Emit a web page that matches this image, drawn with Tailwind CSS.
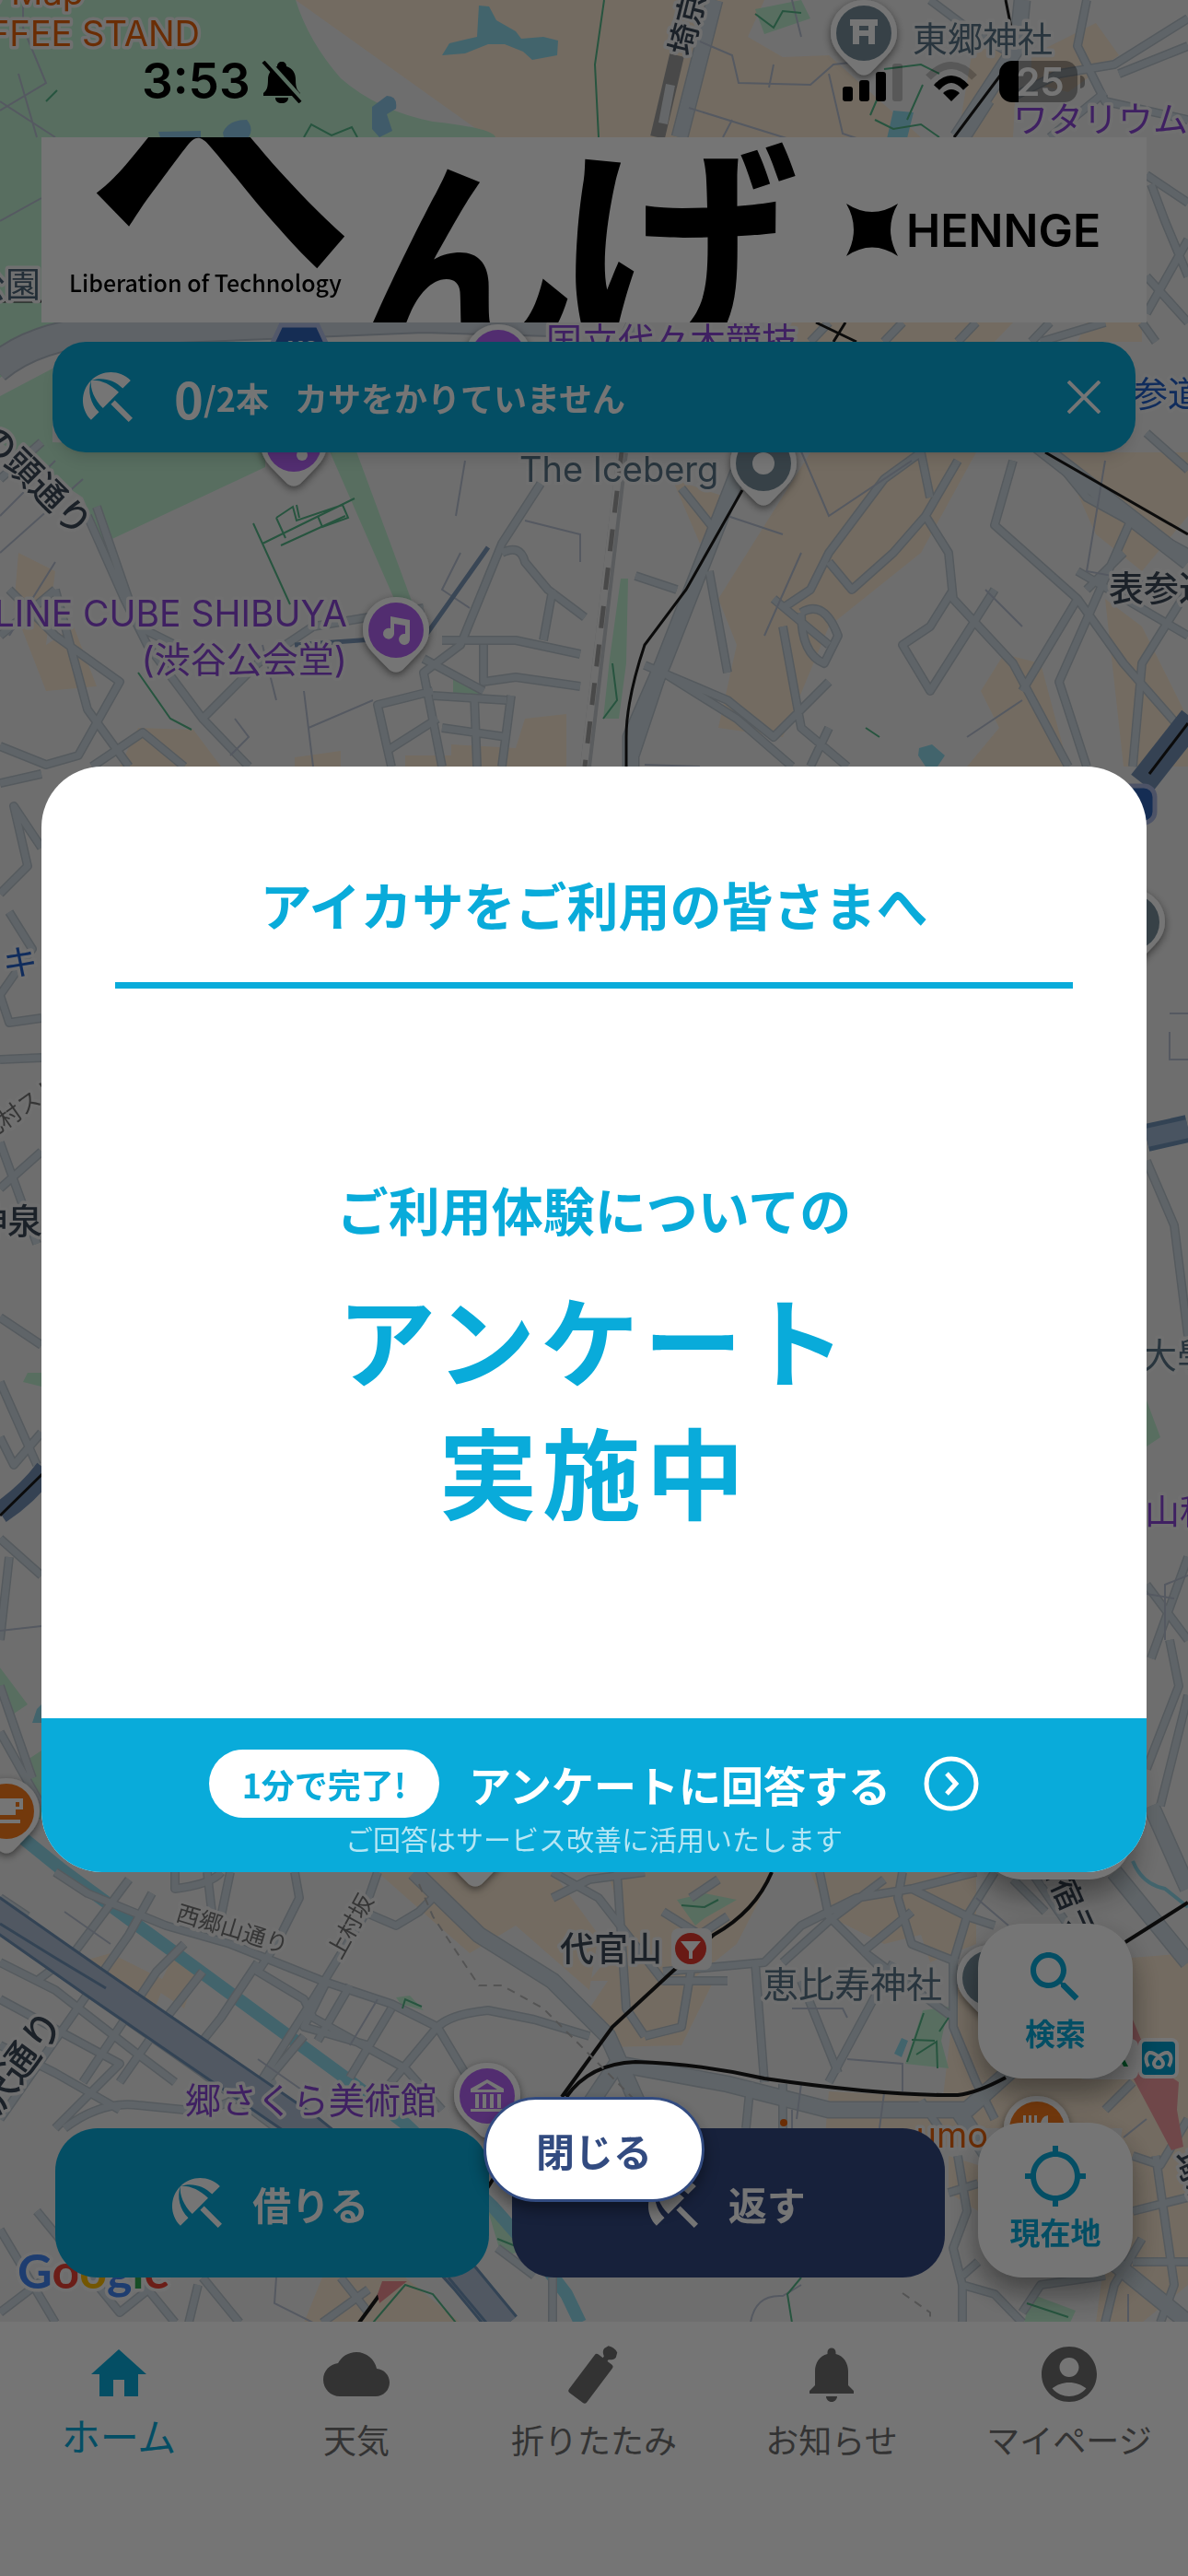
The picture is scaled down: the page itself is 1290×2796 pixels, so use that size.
<!DOCTYPE html>
<html lang="ja">
<head>
  <meta charset="UTF-8">
  <meta name="viewport" content="width=device-width, initial-scale=1.0">
  <title>アイカサ</title>
  <script src="https://cdn.jsdelivr.net/npm/@tailwindcss/browser@4"></script>
</head>
<body class="bg-white font-['Noto_Sans_CJK_JP',sans-serif]">
  <div class="relative flex min-h-screen flex-col overflow-hidden">

    <main class="relative flex flex-1 flex-col overflow-hidden bg-[#f0f0f0]">
      <!-- map -->
      <svg class="absolute inset-0 h-full w-full" viewBox="0 0 1290 2520" preserveAspectRatio="xMidYMin slice" fill="none" aria-hidden="true">
        <defs>
          <path id="pin" d="M0-36C20-36 36-20 36-1C36 16 25 24 14 36L7 43Q0 48-7 43L-14 36C-25 24-36 16-36-1C-36-20-20-36 0-36Z" fill="#fff"/>
          <filter id="soft" x="-30%" y="-30%" width="160%" height="170%"><feDropShadow dx="0" dy="3" stdDeviation="4" flood-opacity=".5"/></filter>
          <g id="avenues">
            <path d="M1110 0L1105 50L1040 149M1110 470L1290 610M810 491L720 720L685 800V832M690 350L680 371"/>
            <path d="M776 0L738 149M450 2032L520 2100L600 2150L660 2210L700 2300M630 2300L670 2240L790 2262L900 2290H1050L1150 2200M1040 2290L1080 2350"/>
            <path d="M1210 2032L1290 2130M1190 2440L1290 2521M1250 1960L1290 2050"/>
          </g>
          <g id="streets">
            <path d="M1290 20L1210 70L1150 80L1100 105M1180 0L1170 50L1200 110L1290 130M1100 60L1050 30L1010 0M1215 80L1290 50M1140 149L1200 100M1050 149L1075 110"/>
            <path d="M0 690L60 640M0 520L45 480M95 560L135 650L160 700L220 780L270 832M220 780L280 720L340 680L460 660M105 550L150 680L190 700M0 810L50 830L85 820L130 740L60 690L10 640M60 640L95 770L140 832M100 832L155 795L200 832"/>
            <path d="M587 525L545 590L500 700L460 730L480 832M545 600Q565 590 570 610L595 640L635 670M480 695H560L630 710M600 640L590 695M525 700V740L560 735L630 745M460 715L525 750M470 750L410 765L425 832M555 755L545 832M480 790L550 800M515 755L518 832M470 755L550 760M420 815L475 780"/>
            <path d="M690 625L735 640M740 530L780 580M690 820L720 730L800 780L860 832M770 620L790 730M700 722L790 760L840 800L900 740M850 660L880 640L900 600L960 520L1000 491M900 610L925 640L970 600L1005 560L1040 500M1005 560L1030 600L1035 650L1100 720L1160 832M1035 640L1010 680L980 700L1010 750L1080 640M1100 500L1080 570L1170 650L1220 720L1290 800M1170 650L1110 750M1220 600L1180 640M850 680L870 790L920 832M840 650L900 700M1170 620L1290 690M1230 560L1150 740L1180 832M900 790L880 832M870 665Q895 650 910 690L895 720Q870 710 870 665M1290 640L1240 720L1230 832M1140 491L1180 540L1290 600M1000 491L1010 540"/>
            <path d="M1200 350L1130 371M1245 190L1290 220M1250 200L1265 240L1290 300M1245 300L1290 350M1290 260L1245 340M1245 470L1290 510M900 350L880 371M980 350L960 371M1060 350L1040 371M1140 350L1120 371M1240 350L1255 371"/>
            <path d="M0 850L45 840M0 970L30 940L15 875L45 920M10 990L35 1030L0 1080L10 1110L45 1105M0 1150L45 1148M0 1240L40 1350M0 1290L45 1250M0 1430L45 1460M0 1500L40 1590M45 1555L15 1590L0 1560M0 1670L45 1710M10 1690L0 1780M0 1830L35 1930M45 1960L0 1880M1245 1260L1275 1330L1290 1450M1245 1720L1290 1780M1290 1690L1250 1800M1270 1780L1280 1830L1245 1920M1290 1840L1260 1960"/>
            <path d="M60 2032L95 2055L180 2090L250 2110L350 2150L425 2175L475 2200Q490 2186 530 2182L580 2192L640 2210M165 2055L140 2100L70 2200L0 2300M190 2032V2050Q230 2045 240 2032M225 2032L230 2075M250 2032L240 2080M320 2032L325 2060L300 2110L280 2140L330 2170L340 2190L385 2215L440 2245L480 2290M410 2032L395 2075L430 2090L455 2075L470 2060M395 2080L340 2170L270 2280M355 2150L330 2200L400 2220M380 2155L345 2215M425 2180L380 2255M475 2200L400 2290M475 2200L505 2250M0 2095L120 2180L220 2250L300 2310M0 2130L60 2160L150 2230L190 2260M20 2080L100 2150L190 2210M0 2220L60 2250L95 2270L130 2290M0 2170L130 2240L60 2310M40 2150L80 2120L140 2040M90 2260L130 2200L170 2140L200 2110M220 2140L165 2210L130 2260M280 2130L240 2190L200 2240M330 2210L280 2270M0 2060L30 2080M70 2310Q110 2280 150 2285L200 2290L240 2285L300 2260"/>
            <path d="M600 2032L650 2060L720 2150L790 2150M670 2032L680 2180L700 2210M600 2060L640 2040L700 2032M720 2140L830 2130L870 2090L930 2060L990 2050L1060 2032M890 2032L900 2080L935 2115L970 2150M850 2130L900 2085L960 2040M935 2120L990 2075M940 2120L1035 2190M980 2032L975 2060L990 2110L1040 2130M990 2050L1050 2080L1080 2090M1080 2032L1050 2080L1035 2130V2200L1060 2260L1080 2300M820 2130L830 2260M870 2150L910 2250M970 2130L900 2260M700 2210L740 2200L750 2140M750 2060L780 2040M720 2075L760 2100L790 2080M1120 2032L1160 2090M1100 2040L1135 2075"/>
            <path d="M815 2260L810 2310M850 2262V2310M1000 2280L1020 2310M1062 2370L1030 2380M1040 2340L1050 2400L1035 2440L1045 2480L1080 2490L1110 2521M1045 2480V2521M1045 2470L1062 2455M1230 2340L1260 2350L1290 2300M1230 2400L1290 2385M1255 2340L1275 2480L1260 2521M1230 2260L1200 2290M1200 2470L1130 2480L1110 2510M1230 2455H1290M1240 2430L1210 2480L1200 2521M0 2420L60 2521M40 2400L130 2510L180 2470M0 2510L50 2472M150 2472L190 2521M220 2472L260 2521M205 2521L215 2480M370 2472L400 2510M400 2485L350 2521M540 2440L580 2470M600 2472L600 2521M535 2300L560 2330"/>
          </g>
        </defs>

        <!-- blocks -->
        <g fill="#fae9d3">
          <path d="M321 0H830L812 40L850 62L900 60L1000 149H530Z"/>
          <path d="M1060 30L1105 60L1100 149H1040ZM1120 60L1190 25L1215 60L1160 100L1120 90Z"/>
          <path d="M860 350H1100L1080 371H850ZM1180 350H1240V371H1170Z"/>
          <path d="M880 491H1060L1000 600L900 680L850 800L780 790L800 700L780 650ZM730 520L790 540L760 590Z"/>
          <path d="M1150 491H1290V560L1240 620L1190 580ZM1090 710L1130 720L1160 832H1050L1085 790L1065 750ZM1200 650L1240 680L1290 780V832H1220Z"/>
          <path d="M20 600L60 620L50 700L80 680L105 745L50 750L15 660ZM150 790L210 792L240 832H130ZM320 822L370 815V832H320ZM570 780L615 775V832H440V820H490V808L560 812Z"/>
          <path d="M410 2032H600L650 2100L640 2160L560 2090L510 2120L470 2085ZM660 2032H840L800 2110L750 2150L640 2150L680 2100Z"/>
          <path d="M880 2032H1060V2110L1010 2130L1000 2100L960 2110L900 2080ZM660 2150H775L740 2220L660 2222L640 2180Z"/>
          <path d="M120 2120L180 2150L160 2200L85 2130ZM190 2120L215 2135L200 2180L170 2160ZM900 2270L1060 2278V2330H895ZM1040 2140L1290 2120V2310H1020Z"/>
          <path d="M350 2472H440L500 2521H330ZM1030 2340L1062 2350V2400L1030 2380ZM1220 2300L1290 2290V2480L1240 2521H1190Z"/>
        </g>

        <!-- parks -->
        <g fill="#bfefd1">
          <path d="M0 0H321Q335 45 370 85Q410 120 470 132Q535 139 538 149V340Q300 350 80 371Q40 378 0 410Z"/>
          <path d="M0 430L57 400V480L288 490V507L111 590L90 540L30 500L0 480Z"/>
          <path d="M358 490H387L448 655L428 650Z"/>
          <path d="M674 628H682L680 720L672 780H655L662 715ZM492 730L520 745V753H492Z"/>
          <path d="M820 10L870 0L880 20L830 37ZM30 1490H45V1505L25 1500ZM0 1810L30 1850L15 1860L0 1830ZM30 1910L45 1900V1975L30 1970Z"/>
          <path d="M735 2062L765 2055L800 2062L765 2082L755 2090ZM430 2168L445 2166L460 2182L435 2175ZM1002 2182L1030 2178L1022 2215L1030 2245L983 2240Z"/>
          <path d="M1245 1520L1260 1560L1245 1570ZM530 2400L575 2440L545 2450ZM1120 2490L1168 2508L1162 2521H1112Z"/>
        </g>

        <!-- water -->
        <g fill="#90d9ec">
          <path d="M520 6L531 7L539 22L560 34L566 42L590 40L606 44L605 60L578 65L568 56L548 48L530 48L505 58L480 60L488 47L518 40Z"/>
          <path d="M420 104Q432 104 430 118L420 124L426 142L412 149L404 140V116ZM172 143L218 142V149H174ZM242 144Q248 130 268 130Q276 140 270 149H243Z" fill="#8cc6e6"/>
          <path d="M970 120L992 122L985 150L970 168L962 155ZM998 812L1012 808L1026 820L1018 832H1005L997 820Z"/>
          <path d="M40 1855L45 1850V1870L35 1870ZM979 2212L986 2215L979 2233L971 2229Z"/>
        </g>
        <g stroke="#90d9ec">
          <path d="M0 1975L68 2030L376 2256L440 2305L535 2395L592 2460L615 2490L630 2521" stroke-width="14"/>
          <path d="M1230 2020Q1240 2045 1265 2050L1290 2070" stroke-width="4"/>
        </g>

        <!-- roads: casing first, surface over it -->
        <path d="M-5 400Q40 362 120 359L460 345L600 349" stroke="#b4bdc8" stroke-width="34"/>
        <path d="M-5 400Q40 362 120 359L460 345L600 349" stroke="#cfd8e1" stroke-width="30"/>
        <g stroke="#b9c4cd" stroke-linejoin="round">
          <use href="#avenues" stroke-width="19"/>
          <use href="#streets" stroke-width="10"/>
        </g>
        <g stroke="#d0dbe2" stroke-linejoin="round">
          <use href="#avenues" stroke-width="16"/>
          <use href="#streets" stroke-width="7"/>
        </g>

        <!-- lanes -->
        <g stroke="#b9c2d3" stroke-width="2">
          <path d="M760 45L795 60L802 90L880 92L905 70L950 65M748 117L870 155M795 130L785 149M840 70L835 95M860 0L870 40M900 80L915 145L945 155M0 120L50 90L25 30V0M0 110L60 149M20 80L40 149M0 240L45 215M0 560L60 500M0 600L90 520M10 690L60 610"/>
          <path d="M330 750L340 832M405 760L335 790M300 760L285 700M255 780L270 800L250 820M500 600L480 640L510 660M495 560L505 500M570 565L630 580V610M700 830L760 832M870 600L830 690M850 580L790 560M870 490L900 560L990 500M1070 640L1110 680M1050 800L1110 760M1200 500L1180 620L1290 640"/>
          <path d="M410 2170L380 2220M280 2235L330 2270M70 2075L120 2110M860 2180L915 2180L920 2190M920 2235L980 2240V2270M860 2290V2310M870 2262L865 2300M960 2272L955 2310M1060 2060L1095 2090M815 2521Q820 2490 850 2492L870 2480M300 2472L298 2500L340 2521M1225 2521V2490M1245 2300L1220 2320"/>
          <path d="M1290 1710L1265 1720V1780M1245 1730L1275 1735M0 1770L45 1765M1270 1100H1290M1270 1120V1150H1290"/>
        </g>
        <g stroke="#55b889" stroke-width="2">
          <path d="M656 0L646 70L650 149M330 149L338 135L360 147L382 138L388 149M820 15L840 30L850 12L870 14M960 75L1000 70L1020 80M945 125L960 90M950 130L970 140L1000 135L1020 149M985 130L1002 92M50 110L62 98"/>
          <path d="M275 568L315 656M285 590L385 541M300 562L318 550L322 565L372 548L378 562L350 572L345 560M310 584L300 562M305 592L375 560M322 548L325 562M150 730L185 780L208 792M665 720L670 760L655 780M940 790L955 800"/>
          <path d="M740 2068L765 2070L780 2062M437 2180L440 2170L458 2178M1003 2185L985 2238M990 2214L1015 2215M995 2230L1017 2216L1018 2245M1030 2190L1020 2205M405 2521L440 2480L470 2490L495 2521M540 2430L570 2442M860 2521L855 2490L870 2472M1115 2500L1160 2515"/>
        </g>

        <!-- highways -->
        <g stroke-linejoin="round">
          <path d="M-10 2073L100 2150L333 2310L420 2380L505 2473L548 2525" stroke="#6f93b8" stroke-width="36"/>
          <path d="M-10 2073L100 2150L333 2310L420 2380L505 2473L548 2525" stroke="#b0c0d6" stroke-width="30"/>
          <path d="M0 2088L60 2125L115 2158M487 2472L528 2521" stroke="#6f93b8" stroke-width="3"/>
          <path d="M1245 1235L1290 1225" stroke="#6f93b8" stroke-width="30"/>
          <path d="M1245 1235L1290 1225" stroke="#a0b7d3" stroke-width="20"/>
          <path d="M0 1642Q30 1622 50 1595" stroke="#7591b5" stroke-width="24"/>
          <path d="M1240 850L1295 780" stroke="#7591b5" stroke-width="30"/>
          <path d="M530 594L462 690L320 700" stroke="#7c98ba" stroke-width="5"/>
        </g>

        <!-- railways -->
        <path d="M735 60L714 149" stroke="#a0a0a0" stroke-width="16"/>
        <path d="M728 92L720 134" stroke="#dde1e5" stroke-width="10"/>
        <path d="M676 491L636 832" stroke="#c4c8cc" stroke-width="12"/>
        <path d="M674 491L634 832" stroke="#efefef" stroke-width="8"/>
        <path d="M675 491L635 832" stroke="#a0a0a0" stroke-width="5" stroke-dasharray="24 18"/>
        <g stroke="#1a1a1a" stroke-width="4">
          <path d="M1092 0L1100 40M1095 70L1036 149M886 350L930 371M918 350L905 371M1135 491L1290 580M806 532L745 640L700 700Q680 760 680 800V832M0 1645L50 1596M1248 840L1290 785M0 327H45" stroke-width="3"/>
          <path d="M838 2032Q820 2075 775 2100L730 2140L665 2200L610 2276M1290 2065L1222 2108M615 2276Q640 2240 690 2238Q760 2240 830 2256Q960 2275 1040 2274Q1060 2272 1092 2255M390 2521L420 2480M526 2380L545 2350"/>
        </g>
        <g stroke="#b8b8b8" stroke-width="2" stroke-dasharray="9 7">
          <path d="M455 2045L470 2080L520 2155H545L590 2180L690 2280M980 2489L1010 2510V2521"/>
        </g>
        <path d="M1230 2192L1250 2240L1280 2260L1278 2290L1285 2330L1272 2334L1230 2255Z" fill="#f29ba0"/>
        <path d="M415 2476H442L412 2500L410 2490Z" fill="#ef8f93"/>

        <!-- route shields -->
        <path d="M305 353H345L360 385H290Z" fill="#2f63b8" stroke="#b4c0e6" stroke-width="5"/>
        <text x="325" y="388" text-anchor="middle" fill="#fff" font-family="Inter" font-size="24" font-weight="600">413</text>
        <rect x="1215" y="853" width="39" height="40" rx="12" fill="#2f63b8" stroke="#a9b6e0" stroke-width="5"/>

        <!-- place pins -->
        <g filter="url(#soft)">
          <g transform="translate(938 36)"><use href="#pin"/><circle r="30" fill="#788f9c"/><path d="M-15-15H15V-8H12V12H5V3H-5V12H-12V-8H-15ZM-5-8V-3H5V-8Z" fill="#fff" fill-rule="evenodd"/></g>
          <g transform="translate(541 388)"><use href="#pin"/><circle r="30" fill="#b364f5"/></g>
          <g transform="translate(319 482)"><use href="#pin"/><circle r="30" fill="#b364f5"/><circle cx="9" cy="12" r="6" fill="#fff"/></g>
          <g transform="translate(829 503)"><use href="#pin"/><circle r="30" fill="#788f9c"/><circle r="12" fill="#fff"/></g>
          <g transform="translate(430 684)"><use href="#pin"/><circle r="30" fill="#b364f5"/><path d="M-6-15L15-11V9A6 6 0 1 1 10 4V-5L-2-7V4A6 6 0 1 1-6-2Z" fill="#fff"/></g>
          <g transform="translate(1229 1001)"><use href="#pin"/><circle r="30" fill="#788f9c"/></g>
          <g transform="translate(7 1966)"><use href="#pin"/><circle r="30" fill="#fa7c1e"/><path d="M-12-14H18V-2H10V4H-12ZM10-10V-5H14V-10ZM-12 9H15V13H-12Z" fill="#fff" fill-rule="evenodd"/></g>
          <use href="#pin" x="516" y="2002"/>
          <g transform="translate(529 2275)"><use href="#pin"/><circle r="30" fill="#b364f5"/><path d="M0-18L18-8V-4H-18V-8ZM-13-2H-9V13H-13ZM-5-2H-1V13H-5ZM3-2H7V13H3ZM11-2H15V13H11ZM-18 14H18V17H-18ZM0-14L-11-7H11Z" fill="#fff" fill-rule="evenodd"/></g>
          <g transform="translate(1075 2147)"><use href="#pin"/><circle r="30" fill="#788f9c"/></g>
          <g transform="translate(1126 2311)"><use href="#pin"/><circle r="30" fill="#fa7c1e"/><path d="M-15-15H-12V-6H-9V-15H-6V-6H-3V-15H0V0H-15ZM4-4Q4-14 12-15V5H4Z" fill="#fff"/></g>
        </g>

        <!-- place names -->
        <g stroke="#f3f3f3" stroke-width="7" stroke-linejoin="round" paint-order="stroke" font-family="Inter, 'Noto Sans CJK JP', sans-serif" font-size="38">
          <g fill="#e8620b">
            <text x="91" y="5" text-anchor="end">Blue Map</text>
            <text x="217" y="50" text-anchor="end">COFFEE STAND</text>
            <text x="1073" y="2331" text-anchor="end">umo</text>
          </g>
          <g fill="#597587">
            <text x="991" y="56">東郷神社</text>
            <text x="564" y="523">The Iceberg</text>
            <text x="828" y="2168" font-size="39">恵比寿神社</text>
            <text x="44" y="322" text-anchor="end" fill="#4d6478">公園</text>
            <text x="1240" y="1485">大學</text>
          </g>
          <g fill="#8a46d6">
            <text x="1100" y="143">ワタリウム</text>
            <text x="593" y="384" font-size="39">国立代々木競技</text>
            <text x="377" y="680" text-anchor="end" font-size="39">LINE CUBE SHIBUYA</text>
            <text x="377" y="730" text-anchor="end" font-size="39">(渋谷公会堂)</text>
            <text x="1243" y="1654">山種</text>
            <text x="201" y="2294" font-size="39">郷さくら美術館</text>
          </g>
          <g fill="#3b4858" font-weight="500">
            <text x="1204" y="652">表参道</text>
            <text x="608" y="2129" font-size="37">代官山</text>
            <text x="-30" y="1339">神泉</text>
            <text transform="translate(-24 477) rotate(45)" font-size="38">の頭通り</text>
            <text transform="translate(-28 2332) rotate(-54)" font-size="42">野沢通り</text>
            <text transform="translate(1127 2014) rotate(66)" font-size="34">新宿ライン</text>
            <text transform="translate(750 62) rotate(-76)" font-size="34">埼京線</text>
            <text transform="translate(1274 2340) rotate(66)" font-size="34">埼京</text>
          </g>
          <g fill="#2360c9">
            <text x="1230" y="441">参道</text>
            <text x="3" y="1058">キャ</text>
          </g>
          <g fill="#757575" font-size="25">
            <text transform="translate(190 2084) rotate(17)">西郷山通り</text>
            <text transform="translate(370 2128) rotate(-61)">上村坂</text>
            <text transform="translate(-15 1240) rotate(-35)">北村スト</text>
          </g>
        </g>
        <circle cx="851" cy="2304" r="4" fill="#e8620b"/>
        <rect x="729" y="2093" width="44" height="45" rx="8" fill="#f6f6f6"/>
        <circle cx="750" cy="2115" r="17" fill="#e5392e"/>
        <path d="M739 2107H761L752 2118V2126H748V2118Z" fill="#fff"/>
        <rect x="1170" y="2213" width="66" height="44" rx="8" fill="#fff"/>
        <text x="1206" y="2243" fill="#0b9a4a" font-family="Inter" font-size="30" font-weight="700">R</text>
        <rect x="1238" y="2214" width="40" height="40" rx="6" fill="#00a0cf" stroke="#fff" stroke-width="4"/>
        <path d="M1247 2243C1243 2236 1244 2230 1248 2228C1254 2227 1263 2236 1263 2240A5 4 0 0 1 1253 2240C1253 2236 1262 2227 1268 2228C1272 2230 1273 2236 1269 2243" stroke="#fff" stroke-width="4"/>
        <text x="19" y="2484" stroke="#f6f6f6" stroke-width="7" paint-order="stroke" stroke-linejoin="round" font-family="Lato, sans-serif" font-size="52" font-weight="700"><tspan fill="#4285f4">G</tspan><tspan fill="#ea4335">o</tspan><tspan fill="#fbbc05">o</tspan><tspan fill="#4285f4">g</tspan><tspan fill="#34a853">l</tspan><tspan fill="#ea4335">e</tspan></text>
      </svg>

      <!-- status bar -->
      <header class="relative flex h-[149px] items-center justify-between pt-7 pr-[112px] pl-[154px] font-['Inter'] text-black">
        <div class="flex items-center gap-3">
          <span class="text-[53px] leading-none font-semibold">3:53</span>
          <svg class="h-[46px] w-11" viewBox="0 0 44 46" aria-label="消音">
            <path d="M22 1C25 1 27 3 27 6C34 8 37 14 37 20C37 30 39 32 42 35V38H2V35C6 32 7 28 7 20C7 14 11 8 17 6C17 3 19 1 22 1ZM15 40H29C29 44 26 46 22 46S15 44 15 40Z" fill="currentColor"/>
            <path d="M6 1L42 41" stroke="#bfefd1" stroke-width="7"/>
            <path d="M2 1L42 45" stroke="currentColor" stroke-width="4"/>
          </svg>
        </div>
        <div class="flex items-center gap-6">
          <svg class="h-11 w-[66px]" viewBox="0 0 66 44" fill="currentColor" aria-label="電波">
            <rect y="27" width="11" height="16" rx="3"/><rect x="18" y="20" width="11" height="23" rx="3"/><rect x="36" y="11" width="11" height="32" rx="3"/><rect x="54" y="2" width="11" height="41" rx="3" opacity=".2"/>
          </svg>
          <svg class="h-11 w-14" viewBox="0 0 56 44" fill="none" stroke="currentColor" aria-label="Wi-Fi">
            <path d="M3 17Q28-9 53 17" stroke-width="8" opacity=".2"/>
            <path d="M12 28Q28 10 44 28" stroke-width="8"/>
            <path d="M28 43L19 34Q28 26 37 34Z" fill="currentColor" stroke="none"/>
          </svg>
          <div class="flex items-center gap-[3px]">
            <div class="flex h-[45px] w-[85px] items-center justify-center rounded-[14px] bg-linear-to-r from-black from-25% to-black/35 to-25% pl-1 text-[42px] leading-none font-semibold text-white">25</div>
            <div class="h-[14px] w-[5px] rounded-r-full bg-black/35"></div>
          </div>
        </div>
      </header>

      <!-- sponsor banner -->
      <a href="#" aria-label="HENNGE" class="relative mx-[45px] block h-[201px] overflow-hidden bg-white">
        <svg class="h-full w-full" viewBox="0 0 1200 201" preserveAspectRatio="xMidYMid slice" font-family="'Noto Sans CJK JP', sans-serif">
          <g font-weight="700">
            <text x="49" y="147" font-size="290">へ</text>
            <text x="333" y="233" font-size="248">ん</text>
            <text x="560" y="226" font-size="262">げ</text>
          </g>
          <text x="30" y="168" font-size="25" font-weight="500">Liberation of Technology</text>
          <path d="M874 72Q902 90 930 72Q914 100 930 129Q902 110 874 129Q890 100 874 72Z"/>
          <text x="939" y="119" font-family="Inter" font-size="50" font-weight="600">HENNGE</text>
        </svg>
      </a>

      <!-- rental state -->
      <section class="relative mx-[57px] mt-[21px] flex h-[120px] items-center rounded-[36px] bg-[#09abda] pr-[30px] pl-6 font-bold text-white shadow-lg">
        <svg class="size-[72px]" viewBox="0 0 24 24" fill="currentColor"><path d="M13.127 14.56l1.43-1.43 6.44 6.443L19.57 21zm4.293-5.73l2.86-2.86c-3.95-3.95-10.35-3.96-14.3-.02 3.93-1.3 8.31-.25 11.44 2.88zM5.95 5.98c-3.94 3.95-3.93 10.35.02 14.3l2.86-2.86C5.7 14.29 4.65 9.91 5.95 5.98zm.02-.02l-.01.01c-.38 3.01 1.17 6.88 4.3 10.02l5.73-5.73c-3.13-3.13-7.01-4.68-10.02-4.3z"/></svg>
        <p class="ml-9 flex items-center text-[36px]"><span class="text-[54px]">0</span>/2本</p>
        <p class="ml-7 flex-1 text-[36px]">カサをかりていません</p>
        <button type="button" aria-label="閉じる" class="p-2">
          <svg class="size-[36px]" viewBox="0 0 36 36" stroke="currentColor" stroke-width="4"><path d="M1 1L35 35M35 1L1 35"/></svg>
        </button>
      </section>

      <!-- map actions -->
      <div class="relative mt-auto flex items-end gap-9 px-[60px] pb-12">
        <div class="flex flex-1 gap-[25px] text-[42px] font-bold text-white">
          <button type="button" class="flex h-[162px] flex-1 items-center justify-center gap-6 rounded-[46px] bg-[#09abda] pr-3">
            <svg class="size-[72px]" viewBox="0 0 24 24" fill="currentColor"><path d="M13.127 14.56l1.43-1.43 6.44 6.443L19.57 21zm4.293-5.73l2.86-2.86c-3.95-3.95-10.35-3.96-14.3-.02 3.93-1.3 8.31-.25 11.44 2.88zM5.95 5.98c-3.94 3.95-3.93 10.35.02 14.3l2.86-2.86C5.7 14.29 4.65 9.91 5.95 5.98zm.02-.02l-.01.01c-.38 3.01 1.17 6.88 4.3 10.02l5.73-5.73c-3.13-3.13-7.01-4.68-10.02-4.3z"/></svg>
            借りる
          </button>
          <button type="button" class="flex h-[162px] flex-1 items-center justify-center gap-6 rounded-[46px] bg-[#344882] pr-3">
            <svg class="size-[72px]" viewBox="0 0 24 24" fill="currentColor"><path d="M13.127 14.56l1.43-1.43 6.44 6.443L19.57 21zm4.293-5.73l2.86-2.86c-3.95-3.95-10.35-3.96-14.3-.02 3.93-1.3 8.31-.25 11.44 2.88zM5.95 5.98c-3.94 3.95-3.93 10.35.02 14.3l2.86-2.86C5.7 14.29 4.65 9.91 5.95 5.98zm.02-.02l-.01.01c-.38 3.01 1.17 6.88 4.3 10.02l5.73-5.73c-3.13-3.13-7.01-4.68-10.02-4.3z"/></svg>
            返す
          </button>
        </div>
        <div class="flex w-[168px] flex-col gap-12 text-[33px] leading-[48px] font-bold text-[#09abda]">
          <button type="button" aria-label="メニュー" class="h-[168px] rounded-[48px] bg-white shadow-[0_16px_32px_rgba(0,0,0,0.4)]"></button>
          <button type="button" class="flex h-[168px] flex-col items-center justify-center rounded-[48px] bg-white pb-1 shadow-[0_16px_32px_rgba(0,0,0,0.4)]">
            <svg class="size-[72px]" viewBox="0 0 24 24" fill="currentColor"><path d="M15.5 14h-.79l-.28-.27C15.41 12.59 16 11.11 16 9.5 16 5.91 13.09 3 9.5 3S3 5.91 3 9.5 5.91 16 9.5 16c1.61 0 3.09-.59 4.23-1.57l.27.28v.79l5 4.99L20.49 19l-4.99-5zm-6 0C7.01 14 5 11.99 5 9.5S7.01 5 9.5 5 14 7.01 14 9.5 11.99 14 9.5 14z"/></svg>
            検索
          </button>
          <button type="button" class="flex h-[168px] flex-col items-center justify-center rounded-[48px] bg-white pb-1 shadow-[0_16px_32px_rgba(0,0,0,0.4)]">
            <svg class="size-[72px]" viewBox="0 0 24 24" fill="currentColor"><path d="M20.94 11c-.46-4.17-3.77-7.48-7.94-7.94V1h-2v2.06C6.83 3.52 3.52 6.83 3.06 11H1v2h2.06c.46 4.17 3.77 7.48 7.94 7.94V23h2v-2.06c4.17-.46 7.48-3.77 7.94-7.94H23v-2h-2.06zM12 19c-3.87 0-7-3.13-7-7s3.13-7 7-7 7 3.13 7 7-3.13 7-7 7z"/></svg>
            現在地
          </button>
        </div>
      </div>
    </main>

    <!-- tabs -->
    <nav class="grid h-[276px] grid-cols-5 bg-white pt-[21px] text-[36px] leading-[68px] text-[#707070]">
      <a href="#" class="flex flex-col items-center text-[42px] leading-[60px] text-[#09abda]" aria-current="page">
        <svg class="size-[72px]" viewBox="0 0 24 24" fill="currentColor"><path d="M10 20v-6h4v6h5v-8h3L12 3 2 12h3v8z"/></svg>
        ホーム
      </a>
      <a href="#" class="flex flex-col items-center">
        <svg class="size-[72px]" viewBox="0 0 24 24" fill="currentColor"><path d="M19.35 10.04C18.67 6.59 15.64 4 12 4 9.11 4 6.6 5.64 5.35 8.04 2.34 8.36 0 10.91 0 14c0 3.31 2.69 6 6 6h13c2.76 0 5-2.24 5-5 0-2.64-2.05-4.78-4.65-4.96z"/></svg>
        天気
      </a>
      <a href="#" class="flex flex-col items-center">
        <svg class="size-[72px]" viewBox="0 0 72 72" fill="currentColor"><g transform="rotate(37 36 36)"><rect x="24" y="16" width="24" height="52" rx="3"/><path d="M33 17V14Q28 11 28 7L30 2Q36-1 42 2L44 7Q44 11 39 14V17Z"/></g></svg>
        折りたたみ
      </a>
      <a href="#" class="flex flex-col items-center">
        <svg class="size-[72px]" viewBox="0 0 24 24" fill="currentColor"><path d="M12 22c1.1 0 2-.9 2-2h-4c0 1.1.89 2 2 2zm6-6v-5c0-3.07-1.64-5.64-4.5-6.32V4c0-.83-.67-1.5-1.5-1.5s-1.5.67-1.5 1.5v.68C7.63 5.36 6 7.92 6 11v5l-2 2v1h16v-1l-2-2z"/></svg>
        お知らせ
      </a>
      <a href="#" class="flex flex-col items-center">
        <svg class="size-[72px]" viewBox="0 0 24 24" fill="currentColor"><path d="M12 2C6.48 2 2 6.48 2 12s4.48 10 10 10 10-4.48 10-10S17.52 2 12 2zm0 4c1.93 0 3.5 1.57 3.5 3.5S13.93 13 12 13s-3.5-1.57-3.5-3.5S10.07 6 12 6zm0 14c-2.03 0-4.43-.82-6.14-2.88C7.55 15.8 9.68 15 12 15s4.45.8 6.14 2.12C16.43 19.18 14.03 20 12 20z"/></svg>
        マイページ
      </a>
    </nav>

    <!-- survey dialog -->
    <div class="absolute inset-0 flex items-center bg-black/54 px-[45px] pt-[68px]">
      <section role="dialog" aria-modal="true" aria-labelledby="surveyTitle" class="flex min-h-[1200px] w-full flex-col overflow-hidden rounded-[66px] bg-white text-center font-bold text-[#09abda]">
        <h1 id="surveyTitle" class="mx-20 border-b-[7px] border-[#09abda] pt-[109px] pb-[45px] text-[56px] leading-[80px]">アイカサをご利用の皆さまへ</h1>
        <div class="flex flex-1 flex-col items-center justify-center">
          <p class="text-[56px] leading-[80px]">ご利用体験についての</p>
          <p class="mt-7 text-[107px] leading-[143px] tracking-wider">アンケート<br>実施中</p>
        </div>
        <a href="#" class="flex h-[167px] flex-col items-center bg-[#09abda] pt-[34px] text-white">
          <span class="flex items-center">
            <span class="flex h-[74px] w-[250px] items-center justify-center rounded-full bg-white text-[36px] text-[#09abda]">1分で完了!</span>
            <span class="ml-8 text-[46px] leading-[70px]">アンケートに回答する</span>
            <svg class="ml-9 size-[60px]" viewBox="0 0 60 60" fill="none" stroke="currentColor" stroke-width="5"><circle cx="30" cy="30" r="27"/><path d="M25 19L35 30L25 41"/></svg>
          </span>
          <span class="text-[30px] leading-[44px] font-normal text-white/70">ご回答はサービス改善に活用いたします</span>
        </a>
      </section>
      <button type="button" class="absolute bottom-[406px] left-1/2 h-[114px] w-[240px] -translate-x-1/2 rounded-full border-[3px] border-[#324b80] bg-white text-[42px] font-bold text-[#324b80] shadow-[0_8px_16px_rgba(0,0,0,0.4)]">閉じる</button>
    </div>
  </div>
</body>
</html>
